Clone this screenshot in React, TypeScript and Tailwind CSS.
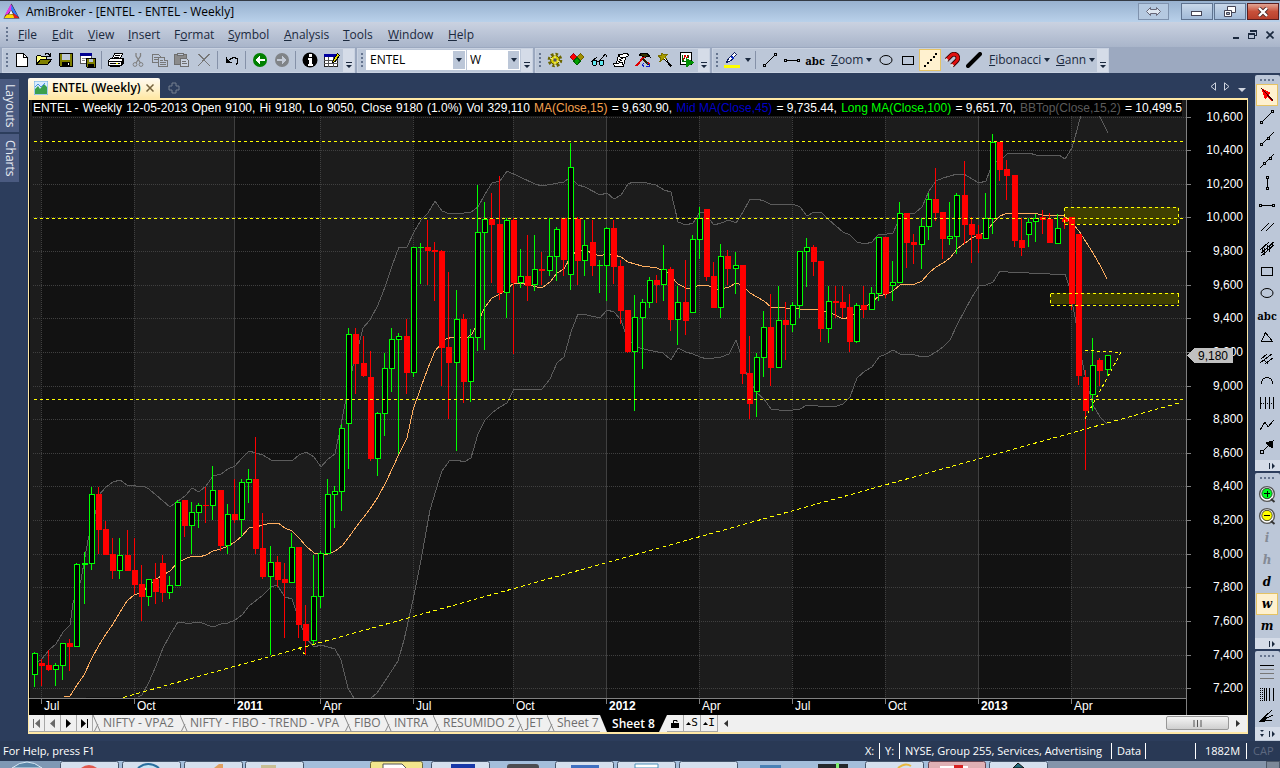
import React from "react";

type Candle = [up: 0 | 1, high: number, top: number, bottom: number, low: number];

const candles: Candle[] = [
  [1, 652, 653, 675, 687], [0, 659, 663, 666, 686], [0, 650, 665, 670, 671], [1, 663, 665, 670, 686],
  [1, 643, 643, 666, 680], [0, 639, 643, 647, 671], [1, 563, 564, 647, 647], [1, 552, 563, 565, 604],
  [1, 487, 494, 564, 570], [0, 487, 494, 530, 554], [0, 521, 529, 555, 555], [0, 538, 554, 571, 579],
  [1, 538, 555, 571, 579], [0, 530, 555, 571, 571], [0, 538, 570, 585, 594], [0, 565, 584, 597, 621],
  [1, 579, 579, 597, 606], [0, 563, 579, 592, 604], [0, 555, 563, 593, 602], [1, 576, 585, 593, 599],
  [1, 500, 502, 586, 586], [0, 500, 500, 526, 537], [1, 502, 512, 526, 554], [1, 503, 505, 513, 528],
  [0, 487, 505, 506, 523], [1, 466, 490, 506, 520], [0, 490, 490, 546, 551], [1, 504, 514, 546, 554],
  [0, 479, 514, 520, 523], [1, 479, 482, 520, 537], [1, 469, 479, 483, 503], [0, 437, 479, 549, 554],
  [0, 513, 548, 577, 579], [1, 546, 562, 577, 655], [0, 556, 562, 580, 587], [0, 563, 579, 583, 638],
  [1, 533, 547, 583, 583], [0, 547, 547, 625, 638], [0, 605, 624, 641, 655], [1, 555, 596, 641, 645],
  [1, 551, 553, 597, 608], [1, 479, 494, 554, 554], [1, 486, 491, 495, 528], [1, 424, 428, 492, 511],
  [1, 328, 334, 424, 469], [0, 328, 334, 364, 394], [0, 336, 363, 376, 377], [0, 351, 377, 459, 461],
  [1, 412, 413, 459, 476], [1, 353, 368, 414, 436], [1, 328, 339, 369, 392], [1, 333, 336, 340, 454],
  [0, 319, 336, 373, 394], [1, 247, 247, 373, 377], [1, 243, 247, 248, 284], [0, 220, 247, 251, 285],
  [0, 242, 250, 252, 301], [0, 250, 251, 348, 386], [0, 272, 347, 363, 419], [1, 290, 319, 363, 451],
  [0, 314, 319, 382, 403], [1, 329, 337, 382, 402], [1, 185, 232, 338, 351], [1, 202, 219, 233, 350],
  [0, 193, 219, 225, 283], [0, 176, 224, 293, 300], [1, 218, 220, 293, 318], [0, 218, 220, 283, 354],
  [1, 249, 276, 283, 288], [0, 235, 276, 286, 301], [1, 235, 269, 285, 291], [0, 252, 269, 271, 285],
  [1, 218, 256, 271, 276], [1, 227, 229, 257, 281], [0, 218, 218, 260, 276], [1, 143, 167, 275, 290],
  [0, 217, 219, 261, 285], [1, 220, 245, 261, 276], [0, 220, 242, 266, 276], [1, 260, 265, 266, 293],
  [1, 227, 228, 266, 301], [0, 220, 228, 267, 284], [0, 260, 266, 311, 324], [0, 310, 310, 352, 353],
  [1, 295, 317, 352, 411], [1, 299, 302, 318, 369], [1, 277, 280, 303, 308], [0, 275, 280, 285, 303],
  [1, 245, 269, 285, 301], [0, 267, 269, 320, 331], [1, 286, 302, 320, 345], [0, 260, 302, 321, 335],
  [1, 235, 239, 313, 313], [1, 207, 218, 240, 259], [0, 209, 209, 277, 281], [0, 262, 276, 308, 308],
  [1, 244, 256, 308, 318], [0, 250, 256, 269, 285], [1, 252, 265, 269, 294], [0, 265, 265, 374, 384],
  [0, 336, 373, 404, 419], [1, 353, 357, 392, 417], [1, 311, 327, 358, 377], [0, 294, 327, 368, 386],
  [1, 286, 320, 368, 368], [0, 302, 320, 325, 360], [1, 302, 305, 325, 332], [1, 251, 251, 306, 318],
  [1, 238, 247, 252, 287], [0, 245, 247, 262, 276], [0, 261, 261, 329, 342], [1, 286, 301, 329, 343],
  [0, 286, 301, 303, 318], [0, 286, 302, 308, 318], [0, 294, 307, 342, 352], [1, 303, 305, 342, 343],
  [0, 286, 305, 310, 318], [1, 287, 293, 310, 310], [1, 237, 237, 294, 301], [0, 237, 237, 294, 298],
  [1, 261, 282, 286, 301], [1, 202, 213, 283, 283], [0, 213, 213, 243, 268], [0, 234, 242, 245, 264],
  [1, 218, 226, 245, 269], [1, 193, 199, 227, 240], [0, 168, 199, 213, 221], [0, 212, 212, 239, 259],
  [1, 202, 236, 239, 245], [1, 193, 195, 237, 254], [0, 161, 195, 225, 244], [0, 217, 224, 235, 263],
  [0, 225, 234, 239, 253], [1, 193, 218, 239, 239], [1, 134, 142, 219, 234], [0, 142, 142, 170, 181],
  [0, 160, 169, 176, 200], [0, 175, 175, 241, 247], [0, 218, 240, 248, 256], [1, 218, 222, 235, 247],
  [1, 214, 218, 222, 242], [0, 210, 217, 220, 234], [0, 213, 219, 243, 243], [1, 214, 228, 244, 244],
  [0, 214, 218, 222, 229], [0, 217, 217, 304, 310], [0, 234, 234, 376, 385], [0, 370, 377, 411, 470],
  [1, 338, 365, 395, 411], [0, 358, 360, 371, 386], [1, 355, 355, 370, 376],
];

const average =
  "64,697 70,696 77,685 84,675 92,658 99,645 106,634 113,624 120,612 127,601 134,595 142,592 149,586 156,579 163,575 170,571 178,562 185,559 192,556 199,557 206,555 213,551 221,549 228,546 235,542 242,536 249,528 256,527 263,525 271,523 278,523 285,528 292,531 299,538 306,546 314,553 321,554 328,554 335,551 342,546 349,537 356,527 363,518 370,509 378,497 387,480 399,454 407,438 413,410 421,387 428,368 435,351 440,345 446,339 453,337 468,337 472,334 478,322 485,307 492,298 500,294 507,289 514,283 521,283 528,285 542,288 550,282 557,273 564,269 571,256 578,250 587,251 599,256 607,254 614,255 621,257 628,262 642,266 657,268 668,273 678,284 688,289 700,285 707,285 717,290 729,287 736,283 742,285 750,293 757,297 764,301 771,307 786,308 800,309 807,310 818,309 833,314 843,319 850,317 857,312 865,307 872,302 879,296 887,294 893,291 900,285 915,284 922,281 929,273 936,267 943,263 950,258 958,248 965,243 972,238 979,235 986,232 993,223 1000,216 1005,214 1015,213 1033,213 1043,215 1055,216 1063,215 1072,223 1079,231 1086,242 1093,253 1101,267 1107,279";

const upperBand =
  "34,664 41,660 49,650 56,644 63,632 70,625 73,603 81,580 88,540 96,510 99,495 106,487 113,482 120,480 127,485 145,487 149,489 156,495 170,507 178,501 185,496 192,488 199,492 206,486 213,476 221,474 228,469 235,466 242,458 249,451 263,455 271,460 292,461 299,455 306,452 314,457 321,467 328,459 335,454 340,430 349,383 355,358 360,340 363,328 370,320 378,305 385,287 392,266 399,247 407,247 414,232 421,220 428,213 435,201 442,211 450,214 457,213 464,213 471,212 478,207 485,194 492,183 500,181 507,171 535,184 542,186 553,184 564,182 568,179 573,180 578,185 585,187 600,195 607,193 614,199 621,195 628,184 633,182 642,182 656,185 664,190 671,192 678,222 686,225 693,223 700,212 705,213 714,225 721,223 729,220 736,223 743,212 750,199 757,199 764,201 770,204 786,205 793,204 800,207 807,216 814,212 822,213 829,220 843,232 850,235 857,242 865,244 872,242 879,234 887,234 893,233 900,217 905,213 915,213 922,207 929,191 936,181 943,178 957,174 964,174 972,179 979,183 986,181 990,170 995,162 1001,160 1008,153 1029,153 1036,155 1059,155 1065,159 1072,148 1077,130 1081,115 1087,100 1093,100 1099,115 1108,133";

const lowerBand =
  "138,697 142,695 149,682 156,666 163,648 170,635 178,622 185,623 192,623 199,622 213,627 221,624 228,623 235,620 242,615 249,606 263,595 271,587 277,585 285,597 292,599 299,620 306,638 314,647 321,645 335,649 341,660 348,688 354,698 371,698 377,693 387,678 398,661 404,640 413,600 421,560 430,510 439,480 442,471 450,460 457,460 464,462 471,458 478,434 485,420 492,413 500,407 507,403 514,389 542,389 550,379 557,363 564,357 571,332 578,314 587,315 600,318 607,310 614,312 621,320 625,332 630,342 640,348 648,350 663,353 671,360 678,348 686,352 693,354 700,357 707,359 721,357 729,354 736,340 740,352 747,375 757,393 764,399 771,409 786,411 800,409 807,405 814,405 822,407 837,406 843,404 850,397 857,378 865,371 872,367 879,357 886,354 893,350 900,354 915,355 922,357 929,356 936,352 943,347 950,340 958,323 965,310 972,297 979,286 986,285 993,282 1000,271 1008,272 1029,273 1050,274 1065,274 1069,286 1075,317 1082,360 1086,380 1093,405 1100,417 1107,424";

const bandArea = upperBand + " " + lowerBand.split(" ").reverse().join(" ") + " 34,698";

const priceLevels: [string, number][] = [
  ["10,600", 117], ["10,400", 150], ["10,200", 184], ["10,000", 217], ["9,800", 251], ["9,600", 285],
  ["9,400", 318], ["9,200", 352], ["9,000", 386], ["8,800", 419], ["8,600", 453], ["8,400", 486],
  ["8,200", 520], ["8,000", 554], ["7,800", 587], ["7,600", 621], ["7,400", 655], ["7,200", 688],
];

const quarters: [string, number][] = [
  ["Jul", 41], ["Oct", 134], ["2011", 234], ["Apr", 320], ["Jul", 413], ["Oct", 513],
  ["2012", 606], ["Apr", 699], ["Jul", 792], ["Oct", 885], ["2013", 978], ["Apr", 1071],
];

const darkSpans: [number, number][] = [[41, 134], [234, 320], [413, 513], [606, 699], [792, 885], [978, 1071]];

const legend: [string, string][] = [
  ...["ENTEL -", "Weekly", "12-05-2013", "Open", "9100,", "Hi", "9180,", "Lo", "9050,", "Close", "9180", "(1.0%)", "Vol", "329,110"].map(
    (t): [string, string] => [t, "text-white"],
  ),
  ["MA(Close,15)", "text-[#f4a050]"], ["= 9,630.90,", "text-white"],
  ["Mid MA(Close,45)", "text-[#0000c8]"], ["= 9,735.44,", "text-white"],
  ["Long MA(Close,100)", "text-[#00ff00]"], ["= 9,651.70,", "text-white"],
  ["BBTop(Close,15,2)", "text-[#5c5c5c]"], ["= 10,499.5", "text-white"],
];

function CandleMark({ index, candle }: { index: number; candle: Candle }) {
  const [up, high, top, bottom, low] = candle;
  const x = Math.floor(34 + (index * 93) / 13);
  if (!up) {
    return (
      <g fill="#ff0000">
        <rect x={x} y={high} width="1" height={low - high} />
        <rect x={x - 2} y={top} width="6" height={bottom - top} />
      </g>
    );
  }
  return (
    <g fill="#00ff00">
      <rect x={x} y={high} width="1" height={low - high} />
      <rect x={x - 2} y={top} width="6" height={bottom - top} />
      {bottom - top > 2 && <rect x={x - 1} y={top + 1} width="4" height={bottom - top - 2} fill="#000" />}
    </g>
  );
}

function PriceChart() {
  return (
    <svg viewBox="29 100 1218 615" className="block h-full w-full bg-black" preserveAspectRatio="xMinYMin meet" shapeRendering="crispEdges" role="img" aria-label="ENTEL weekly candles">
      <defs>
        <clipPath id="plot"><rect x="30" y="100" width="1156" height="598" /></clipPath>
      </defs>
      <rect x="30" y="100" width="1156" height="598" fill="#1c1c1c" />
      {darkSpans.map(([a, b]) => <rect key={a} x={a} y="100" width={b - a} height="598" fill="#121212" />)}
      <g clipPath="url(#plot)"><polygon points={bandArea} fill="#1c1c1c" /></g>
      <g stroke="#404040" strokeDasharray="1 1">
        {priceLevels.map(([l, y]) => <line key={l} x1="33" x2="1186" y1={y + 0.5} y2={y + 0.5} />)}
      </g>
      {quarters.map(([l, x]) => (
        <line key={x} x1={x + 0.5} x2={x + 0.5} y1="116" y2="698" stroke="#404040" strokeDasharray={l.startsWith("20") ? undefined : "1 1"} />
      ))}
      <g fill="#3f3f00">
        <rect x="1064" y="207" width="115" height="17" />
        <rect x="1050" y="293" width="129" height="11" />
      </g>
      <g fill="none" clipPath="url(#plot)">
        <polyline points={upperBand} stroke="#5c5c5c" />
        <polyline points={lowerBand} stroke="#5c5c5c" />
        <polyline points={average} stroke="#ffae60" />
      </g>
      {candles.map((c, i) => <CandleMark key={i} index={i} candle={c} />)}
      <g fill="none" stroke="#ffff00" strokeDasharray="3 3">
        <path d="M34 141.5H1183M34 218.5H1183M34 399.5H1183" />
        <path d="M1064.5 207.5H1179M1064.5 224.5H1179M1050.5 293.5H1179M1050.5 305.5H1179" />
        <path d="M1064.5 208V225M1178.5 208V225M1050.5 294V306M1178.5 294V306" />
        <path d="M1085 350.5L1121 352.5" />
        <path d="M1085 418.5L1121 352.5M299 647L306 656" />
        <path d="M123 697.5L1179 403" strokeDasharray="4 3" />
      </g>
      <g stroke="#808080">
        <path d="M29 698.5H1186M1186.5 100V715" />
        {priceLevels.map(([l, y]) => <line key={l} x1="1187" x2="1191" y1={y + 0.5} y2={y + 0.5} />)}
        {quarters.map(([, x]) => <line key={x} x1={x + 0.5} x2={x + 0.5} y1="699" y2="704" />)}
      </g>
      <g fill="#fff" fontFamily="'Liberation Sans', Arial, sans-serif" fontSize="12">
        {priceLevels.map(([l, y]) => <text key={l} x="1243" y={y + 4} textAnchor="end">{l}</text>)}
        {quarters.map(([l, x]) => <text key={x} x={x + 3} y="710" fontWeight={l.startsWith("20") ? 700 : 400}>{l}</text>)}
        <path d="M1187 355.5L1194 348H1233V363H1194Z" fill="#c0c0c0" />
        <text x="1198" y="360" fill="#000">9,180</text>
      </g>
    </svg>
  );
}

/* ---------- icons ---------- */

function Ico({ children, size = 16 }: { children: React.ReactNode; size?: number }) {
  return (
    <svg width={size} height={size} viewBox={`0 0 ${size} ${size}`} fill="none" stroke="#000" shapeRendering="crispEdges" aria-hidden="true">
      {children}
    </svg>
  );
}

const floppy = (
  <>
    <path d="M1.5 1.5H14.5V14.5H2.5L1.5 13.5Z" fill="#808000" />
    <path d="M4 2H12V8H4Z" fill="#bcc7d8" stroke="none" />
    <path d="M4 10H12V14H4Z" fill="#000" stroke="none" />
    <path d="M10 11H11V13H10Z" fill="#fff" stroke="none" />
  </>
);

const topIcons: Record<string, React.ReactNode> = {
  New: <Ico><path d="M2.5 1.5H9.5L13.5 5.5V14.5H2.5Z" fill="#fff" /><path d="M9.5 1.5V5.5H13.5" /></Ico>,
  Open: <Ico><path d="M0.5 12.5V4.5L1.5 3.5H4.5L5.5 4.5H10.5V7.5" fill="#ffff80" /><path d="M0.5 12.5L4.5 7.5H15.5L11.5 12.5Z" fill="#808000" /><path d="M9 2.5L10 1.5H12L14.5 4M14.5 1V4.5H11" /></Ico>,
  Save: <Ico>{floppy}</Ico>,
  "Save all": <Ico><path d="M0.5 1.5H11.5V11.5H0.5Z" fill="#fff" stroke="#555" /><path d="M0 1H12V4H0Z" fill="#000090" stroke="none" /><path d="M2 6.5H6M2 8.5H5" stroke="#888" /><path d="M6.5 6.5H15.5V15.5H7.5L6.5 14.5Z" fill="#808000" /><path d="M9 7H13V10H9Z" fill="#bcc7d8" stroke="none" /><path d="M8 12H14V15H8Z" fill="#000" stroke="none" /></Ico>,
  Print: <Ico><path d="M4.5 6.5L6.5 1.5H14.5L12.5 6.5Z" fill="#fff" /><path d="M7 3.5H12M6 5.5H11" /><path d="M0.5 8.5L2.5 6.5H15.5V11.5L13.5 13.5H0.5Z" fill="#fff" /><path d="M0 9.5H13M13.5 9V13M2 11.5H12M2.5 13V14.5H11.5V13M14.5 7V12" /><path d="M8 11H10V12H8Z" fill="#ff0" stroke="none" /></Ico>,
  Cut: <Ico><g stroke="#808080" shapeRendering="auto"><path d="M6 1V4L10.5 11M10.5 1V4L6 11" strokeWidth="1.3" /><circle cx="5" cy="12.5" r="1.9" /><circle cx="11" cy="12.5" r="1.9" /></g></Ico>,
  Copy: <Ico><g stroke="#777" fill="#bcc7d8"><path d="M0.5 2.5H6.5L8.5 4.5V10.5H0.5Z" /><path d="M2 5.5H7M2 7.5H7" /><path d="M6.5 5.5H12.5L15.5 8.5V14.5H6.5Z" /><path d="M12.5 5.5V8.5H15.5M8 8.5H11M8 10.5H14M8 12.5H14" /></g></Ico>,
  Paste: <Ico><g stroke="#6f6f6f"><path d="M0.5 2.5H12.5V12.5H0.5Z" fill="#8b8b8b" /><path d="M3.5 3.5V1.5H9.5V3.5Z" fill="#bcc7d8" /><path d="M6.5 6.5H12.5L14.5 8.5V14.5H6.5Z" fill="#c8d0dd" /><path d="M8 9.5H12M8 11.5H13" /></g></Ico>,
  Delete: <Ico><path d="M2 2L14 14M14 2L2 14M3 2L9 8M13 2L4 12" stroke="#777" /></Ico>,
  Undo: <Ico><path d="M2.5 5V10.5H8M3 10L7 6.5L10 5.5L13 6.5L14 9L13 11.5L12 12.5" /><path d="M2 6V11H7Z" fill="#000" stroke="none" /></Ico>,
  Back: <Ico><circle cx="8" cy="8" r="7" fill="#008000" stroke="none" shapeRendering="auto" /><path d="M3 8L8 3.5V7H13V9H8V12.5Z" fill="#fff" stroke="none" /></Ico>,
  Forward: <Ico><circle cx="8" cy="8" r="7" fill="#808488" stroke="none" shapeRendering="auto" /><path d="M13 8L8 3.5V7H3V9H8V12.5Z" fill="#c3cad6" stroke="none" /></Ico>,
  Information: <Ico><circle cx="8" cy="8" r="7.5" fill="#000" stroke="none" shapeRendering="auto" /><path d="M7 2H9.5V4.5H7ZM5.500 6H9.5V12H11V13.5H5.5V12H7V7.5H5.5Z" fill="#fff" stroke="none" /></Ico>,
  "Edit quotes": <Ico><path d="M0.5 2.5H13.5V14.5H0.5Z" fill="#fff" stroke="#222" /><path d="M0 2H14V5H0Z" fill="#0000a0" stroke="none" /><path d="M0 8.5H14M0 11.5H14M4.5 5V15M9.5 5V15" stroke="#555" /><path d="M8.5 10.5L9.5 7.5L13.5 1.5L15.5 3.5L11 9.5Z" fill="#e8e000" /></Ico>,
  Settings: <Ico><g shapeRendering="auto"><circle cx="8" cy="8" r="5.8" stroke="#6b6500" strokeWidth="3" strokeDasharray="2.6 1.9" /><circle cx="8" cy="8" r="4.4" fill="#d8d000" stroke="#5e5a00" /><path d="M8 2V14M3 6L13 10" stroke="#fff8a0" /><circle cx="8" cy="8" r="1.8" fill="#555" stroke="none" /></g></Ico>,
  Categories: <Ico><path d="M1 5L4.5 1.5L8 5L4.5 8.5Z" fill="#ff0000" stroke="#a00020" /><path d="M8 5L11.5 1.5L15 5L11.5 8.5Z" fill="#a09000" stroke="#706000" /><path d="M4.5 9L8 5.5L11.5 9L8 13Z" fill="#00a000" stroke="#006000" /></Ico>,
  Explore: <Ico><path d="M0.5 9.5L6 5M8 9.5L14 2.5L15.5 3.5V5" /><path d="M1.5 8.5H5.5V12.5L4.5 13.5H2.5L1.5 12.5ZM8.5 8.5H12.5V12.5L11.5 13.5H9.5L8.5 12.5Z" fill="#60e8f0" /><path d="M6 9.5H8" /></Ico>,
  Script: <Ico><path d="M5.5 2.5L14.5 1.5L15.5 3.5L12.5 5.5L10.5 14.5L1.5 14.5L0.5 11.5L3.5 11.5Z" fill="#fff" /><path d="M5.5 2.5L7.5 5.5L12 5M3.5 11.5L9 10.5L10.5 14.5M6 7.5L10 6.5M5 9.5L9 8.5" /></Ico>,
  Tools: <Ico><path d="M4 3L7 1H12L15 5L12 4L10 6L7 4Z" fill="#333300" /><path d="M9 5L1 14" stroke="#e00000" strokeWidth="2" /><path d="M8 7L14 13" stroke="#2b2000" strokeWidth="2" /><path d="M9 11L7.5 13L9 15M12 11L15 12L14 15L11 14" stroke="#1020d0" /><path d="M13 10.5L15.5 12.5" stroke="#e00000" /></Ico>,
  Wizard: <Ico><path d="M5 1L7 3L10 2.500L8.500 5L10 8L6.500 7L3 9.500L4 6L1 4L4.500 3.500Z" fill="#a89c00" stroke="#7a7000" /><path d="M8 7L14.5 14.5" strokeWidth="2" /><path d="M7.500 6.5L10 9" stroke="#fff" /></Ico>,
  Report: <Ico><path d="M1.5 0.5H12.5V12.5H1.5Z" fill="#fff" /><path d="M3.5 3V9.5H11M4 9L6 4L8 6L9 3L10 6" stroke="#006000" /><path d="M4 8L6 3.5L8 6L9.5 3" stroke="#e00000" /><path d="M7 6L15.5 10.5L7 15.5Z" fill="#009000" stroke="none" /></Ico>,
  Pen: <Ico size={18}><path d="M3.5 11.5L5.5 7.5L11.5 1.5L13.5 3.5L8 9.5Z" fill="#fff" stroke="#102060" /><path d="M8.5 5.5L11 8" stroke="#1030c0" strokeWidth="2" /><path d="M1 14H17V17H1Z" fill="#ffff00" stroke="none" /></Ico>,
};

const trendLine = <Ico><path d="M3 13L13 3" /><path d="M1.5 12.5H3.5V14.5H1.5ZM12.5 1.5H14.5V3.5H12.5Z" fill="#bcc7d8" /></Ico>;
const horizontal = <Ico><path d="M2 8.5H14" /><path d="M0.5 7.5H2.5V9.5H0.5ZM13.5 7.5H15.5V9.5H13.5Z" fill="#bcc7d8" /></Ico>;
const ellipse = <Ico><ellipse cx="8" cy="8" rx="6" ry="4.5" shapeRendering="auto" /></Ico>;
const rectangle = <Ico><path d="M2.5 4.5H13.5V12.5H2.5Z" /></Ico>;
const abc = <span className="font-['Noto_Serif','DejaVu_Serif',serif] text-[11px] leading-none font-bold text-black">abc</span>;

const sideTools: [string, React.ReactNode][] = [
  ["Select", <Ico><path d="M2 1L12 6L9.5 8L14.5 13L13 14.5L8 10L6 12Z" fill="#ff0000" stroke="none" /><path d="M2 1L14 13.5" stroke="#400" /></Ico>],
  ["Trend line", trendLine],
  ["Ray", <Ico><path d="M3 13L15 1" /><path d="M1.5 12.5H3.5V14.5H1.5ZM8.5 6.5H10.5V8.5H8.5Z" fill="#bcc7d8" /></Ico>],
  ["Extended line", <Ico><path d="M1 15L15 1" /><path d="M4.5 9.5H6.5V11.5H4.5ZM10.5 4.5H12.5V6.5H10.5Z" fill="#bcc7d8" /></Ico>],
  ["Vertical line", <Ico><path d="M8.5 3V13" /><path d="M7.5 1.5H9.5V3.5H7.5ZM7.5 12.5H9.5V14.5H7.5Z" fill="#bcc7d8" /></Ico>],
  ["Horizontal line", horizontal],
  ["Parallel lines", <Ico><path d="M2 12L10 4M7 12L15 4" /></Ico>],
  ["Regression channel", <Ico><path d="M1 9L10 1M2 15L15 4M2 12L15 1M3.5 6V12M5.5 7V14M8.5 4V9M10.5 5V11M13.5 1V6" /></Ico>],
  ["Rectangle", rectangle],
  ["Ellipse", ellipse],
  ["Text", abc],
  ["Triangle", <Ico><path d="M2.5 12.5L6.5 3.5L13.5 12.5Z" /></Ico>],
  ["Pitchfork", <Ico><path d="M2 8L8 3M1 12L5 9L13 3M6 13L14 7M5 9L9 13" /></Ico>],
  ["Arc", <Ico><path d="M2.5 11V8.5L4.5 5.5L7 4.5H9L11.5 5.5L13.5 8.5V11" /></Ico>],
  ["Cycle", <Ico><path d="M1.5 2V14M6.5 2V14M10.5 2V14M14.5 2V14" /><path d="M2 8.5H14" strokeDasharray="1 1" /></Ico>],
  ["Zig zag", <Ico><path d="M1 13L6 5L9 10L15 3" /></Ico>],
  ["Arrow", <Ico><path d="M3 13L12 4" /><path d="M14 2L13 9L7 4Z" fill="#000" /><path d="M1.5 11.5H4.5V14.5H1.5Z" fill="#bcc7d8" /></Ico>],
];

const zoomGlyph = (plus: boolean) => (
  <Ico size={18}>
    <g shapeRendering="auto">
      <circle cx="9" cy="9" r="7.4" fill="#fff" stroke="#555" strokeWidth="1.4" />
      <path d="M13 14L16.5 17" stroke="#333" strokeWidth="2" />
      <circle cx="9" cy="8.5" r="5.2" fill={plus ? "#00ff20" : "#ffff00"} stroke="#222" strokeWidth="0.8" />
    </g>
    <path d={plus ? "M6 8.5H12M9.5 6V12" : "M6 8.5H12"} strokeWidth="1" />
  </Ico>
);

const letter = (s: string, dim?: boolean) => (
  <span className={"font-['DejaVu_Serif','Liberation_Serif',serif] text-[12px] leading-none font-bold italic " + (dim ? "text-[#848a96]" : "text-black")}>{s}</span>
);

const periodTools: [string, React.ReactNode][] = [
  ["Zoom in", zoomGlyph(true)], ["Zoom out", zoomGlyph(false)], ["Intraday", letter("i", true)],
  ["Hourly", letter("h", true)], ["Daily", letter("d")], ["Weekly", letter("w")], ["Monthly", letter("m")],
];

const fanTools: [string, React.ReactNode][] = [
  ["Retracement", <Ico><path d="M1 1.5H15" /><path d="M1 5.5H15M1 9.5H15M1 14.5H15" stroke="#777" /></Ico>],
  ["Time zones", <Ico><path d="M1.5 2V15M3.5 2V15" strokeDasharray="1 1" /><path d="M5.5 2V15M7.5 2V15M10.5 2V15M14.5 2V15" /></Ico>],
  ["Fan", <Ico><path d="M1 13L13 2M1 13L14 7M1 13L13 12" /><path d="M1 13.500L6 9.500V13Z" fill="#000" /></Ico>],
];

/* ---------- small parts ---------- */

const ToolButton = ({ label, active, children }: { label: string; active?: boolean; children: React.ReactNode }) => (
  <button aria-label={label} className={"flex h-[22px] w-[22px] shrink-0 items-center justify-center " + (active ? "border border-[#e5c365] bg-[#fff1cf]" : "")}>
    {children}
  </button>
);

const Grip = () => (
  <span className="flex w-2 shrink-0 items-center justify-center">
    <svg width="2" height="15" aria-hidden="true"><path d="M1 0V15" stroke="#66758f" strokeWidth="2" strokeDasharray="2 2" /></svg>
  </span>
);

const SideGrip = ({ tall }: { tall?: boolean }) => (
  <span className={"flex items-center justify-center " + (tall ? "h-[10px]" : "h-[9px]")}>
    <svg width="15" height="2" aria-hidden="true"><path d="M0 1H15" stroke="#66758f" strokeWidth="2" strokeDasharray="2 2" /></svg>
  </span>
);

const Sep = () => <span className="mx-[2px] h-[18px] w-[2px] shrink-0 border-l border-[#8591a8]" />;

const Caret = () => <svg width="6" height="4" aria-hidden="true"><path d="M0 0H6L3 4Z" fill="#1b293e" /></svg>;

const Overflow = () => (
  <button aria-label="Toolbar options" className="flex h-full w-[11px] shrink-0 items-end justify-center bg-[#d5dce8] pb-1">
    <svg width="6" height="6" aria-hidden="true"><path d="M0 0H6V1H0ZM0 3H6L3 6Z" fill="#1b293e" /></svg>
  </button>
);

const SideOverflow = ({ last }: { last?: boolean }) => (
  <button aria-label="More tools" className={"flex items-center justify-end gap-1 bg-[#d5dce8] pr-1 " + (last ? "h-[13px]" : "mt-px h-[11px]")}>
    {last && <svg width="5" height="7" aria-hidden="true"><path d="M0 0H4L2 2ZM0 4H4L2 7Z" fill="#1b293e" /></svg>}
    <svg width="7" height="6" aria-hidden="true"><path d="M0 0H1V6H0ZM3 0L6 3L3 6Z" fill="#1b293e" /></svg>
  </button>
);

const Bar = ({ label, children }: { label: string; children: React.ReactNode }) => (
  <div role="toolbar" aria-label={label} className="mr-[2px] flex h-[25px] shrink-0 items-center border border-[#c9d2e1] bg-[#bcc7d8]">
    {children}
  </div>
);

const menus: [string, string, string, string][] = [
  ["", "F", "ile", "w-[34px]"], ["", "E", "dit", "w-[36px]"], ["", "V", "iew", "w-[40px]"], ["", "I", "nsert", "w-[46px]"],
  ["F", "o", "rmat", "w-[54px]"], ["", "S", "ymbol", "w-[56px]"], ["", "A", "nalysis", "w-[59px]"], ["", "T", "ools", "w-[45px]"],
  ["", "W", "indow", "w-[60px]"], ["", "H", "elp", "w-[40px]"],
];

const sheets: [string, string][] = [
  ["NIFTY - VPA2", "w-[87px]"], ["NIFTY - FIBO - TREND - VPA", "w-[164px]"], ["FIBO", "w-[40px]"], ["INTRA", "w-[49px]"],
  ["RESUMIDO 2", "w-[83px]"], ["JET", "w-[31px]"], ["Sheet 7", "w-[53px]"],
];

const windowButton = "flex h-[17px] w-[32px] items-center justify-center border border-[#5f7390] bg-gradient-to-b from-[#c9d8ea] via-[#b4c8e0] to-[#a2bad8]";

export default function App() {
  return (
    <div className="flex h-screen w-full flex-col overflow-hidden bg-[#2c3d5c] font-['Open_Sans','Noto_Sans',sans-serif] text-[12px] leading-4 text-[#1b293e]">
      <header className="flex h-[22px] shrink-0 items-center border-t border-[#333a44] bg-gradient-to-b from-[#98b1cf] to-[#b9d1ea] pr-px pl-[3px]">
        <svg width="17" height="17" viewBox="0 0 17 17" aria-hidden="true">
          <path d="M8.500 0.500L16.500 15.500H0.500Z" fill="#222" />
          <path d="M8 1L4 10L1 14Z" fill="#ff20d0" />
          <path d="M8 1L12 9L8 7L5 11L2 12Z" fill="#e838e8" />
          <path d="M8.500 2L15.500 14L11 11L8 6Z" fill="#3078ff" />
          <path d="M8 7L10 11L6 11.500Z" fill="#f4f4ff" />
          <path d="M1 15L4 11.500H10L12 15Z" fill="#ffd800" />
          <path d="M10 10L13 12L16 15H11Z" fill="#e02020" />
        </svg>
        <h1 className="ml-[6px] flex-1 text-[12px] text-black">AmiBroker - [ENTEL - ENTEL - Weekly]</h1>
        <button aria-label="Switch" className="mr-3 flex h-[17px] w-[31px] items-center justify-center border border-[#7f92ad] bg-[#b5c9e0]">
          <svg width="15" height="9" aria-hidden="true"><path d="M0.5 4.5L4.5 0.5V2.5H10.5V0.5L14.5 4.5L10.5 8.5V6.5H4.5V8.5Z" fill="#dfe7f1" stroke="#667" /></svg>
        </button>
        <div className="flex gap-px">
          <button aria-label="Minimize" className={windowButton}>
            <svg width="12" height="5" className="mt-1" aria-hidden="true"><rect x=".5" y=".5" width="10" height="4" fill="#fff" stroke="#445" /></svg>
          </button>
          <button aria-label="Restore" className={windowButton}>
            <svg width="12" height="11" aria-hidden="true" fill="#fff" stroke="#445"><path d="M3.5 .5H11.5V6.5H3.5Z" /><path d="M.5 4.5H7.5V10.5H.5Z" /><path d="M2.5 6.5H5.5V8.5H2.5Z" fill="#9ab" /></svg>
          </button>
          <button aria-label="Close" className="flex h-[17px] w-[32px] items-center justify-center border border-[#5b1e1e] bg-gradient-to-b from-[#e0a494] via-[#c8503a] to-[#b8402c]">
            <svg width="12" height="10" aria-hidden="true"><path d="M2 1L10 9M10 1L2 9" stroke="#4a2a2a" strokeWidth="4" /><path d="M2 1L10 9M10 1L2 9" stroke="#fff" strokeWidth="2.4" /></svg>
          </button>
        </div>
      </header>

      <nav className="flex h-[25px] shrink-0 items-center bg-gradient-to-b from-[#cad2e1] to-[#a9b5ca] pr-1 pl-[3px]">
        <Grip />
        <ul className="flex flex-1 pl-[7px]">
          {menus.map(([a, u, b, w]) => (
            <li key={u + b} className={w}>
              <button className="whitespace-nowrap">{a}<span className="underline">{u}</span>{b}</button>
            </li>
          ))}
        </ul>
        <div className="flex items-center gap-[9px] pr-[2px]">
          <button aria-label="Minimize document"><svg width="6" height="9" aria-hidden="true"><path d="M0 7H6V9H0Z" fill="#1b293e" /></svg></button>
          <button aria-label="Restore document"><svg width="9" height="9" aria-hidden="true" fill="none" stroke="#1b293e" shapeRendering="crispEdges"><path d="M2.5 2V.5H8.5V5.5H6M2 1.5H8M.5 3.5H6.5V8.5H.5ZM1 4.5H6" /></svg></button>
          <button aria-label="Close document"><svg width="8" height="8" aria-hidden="true"><path d="M.5 .5L7.5 7.5M7.5 .5L.5 7.5" stroke="#1b293e" strokeWidth="1.6" /></svg></button>
        </div>
      </nav>

      <div className="flex h-[26px] shrink-0 items-center bg-[#9ca9c0] pl-[2px]">
        <Bar label="Standard">
          <Grip />
          {["New", "Open", "Save", "Save all"].map((n) => <ToolButton key={n} label={n}>{topIcons[n]}</ToolButton>)}
          <Sep />
          {["Print", "Cut", "Copy", "Paste", "Delete"].map((n) => <ToolButton key={n} label={n}>{topIcons[n]}</ToolButton>)}
          <Sep />
          <ToolButton label="Undo">{topIcons.Undo}</ToolButton>
          <Sep />
          {["Back", "Forward"].map((n) => <ToolButton key={n} label={n}>{topIcons[n]}</ToolButton>)}
          <Sep />
          {["Information", "Edit quotes"].map((n) => <ToolButton key={n} label={n}>{topIcons[n]}</ToolButton>)}
          <Overflow />
        </Bar>
        <Bar label="Ticker">
          <Grip />
          <div className="flex h-5 w-[100px] border border-white bg-white">
            <input aria-label="Symbol" defaultValue="ENTEL" className="w-full min-w-0 pl-[3px] text-black outline-none" />
            <button aria-label="Choose symbol" className="flex w-3 shrink-0 items-center justify-center bg-[#bcc7d8]"><Caret /></button>
          </div>
          <div className="relative mr-px ml-px flex h-5 w-[53px] bg-white">
            <select aria-label="Interval" defaultValue="W" className="w-full appearance-none pl-[3px] text-black outline-none"><option>W</option><option>D</option></select>
            <span className="pointer-events-none absolute inset-y-px right-px flex w-[11px] items-center justify-center bg-[#bcc7d8]"><Caret /></span>
          </div>
          <Overflow />
        </Bar>
        <Bar label="Analysis">
          <Grip />
          {["Settings", "Categories", "Explore", "Script", "Tools", "Wizard", "Report"].map((n) => <ToolButton key={n} label={n}>{topIcons[n]}</ToolButton>)}
          <Overflow />
        </Bar>
        <Bar label="Drawing">
          <Grip />
          <ToolButton label="Pen colour">{topIcons.Pen}</ToolButton>
          <button aria-label="Pen options" className="flex w-[10px] justify-center"><Caret /></button>
          <Sep />
          <ToolButton label="Line">{trendLine}</ToolButton>
          <ToolButton label="Horizontal">{horizontal}</ToolButton>
          <button aria-label="Text" className="flex w-[24px] justify-center">{abc}</button>
          <button className="ml-1 flex w-[44px] items-center gap-[3px]"><span><u>Z</u>oom</span><Caret /></button>
          <ToolButton label="Ellipse">{ellipse}</ToolButton>
          <ToolButton label="Rectangle">{rectangle}</ToolButton>
          <ToolButton label="Dotted" active><Ico><path d="M2 13H4V15H2ZM5 10H7V12H5ZM8 7H10V9H8ZM11 4H13V6H11ZM13 1H15V3H13Z" fill="#000" stroke="none" /></Ico></ToolButton>
          <ToolButton label="Magnet"><Ico><g shapeRendering="auto"><path d="M2.5 8L7.5 3Q10.5 1 13 3.5Q15 6.5 12.5 9L8 13.5" stroke="#300" strokeWidth="4.6" /><path d="M2.5 8L7.5 3Q10.5 1 13 3.5Q15 6.5 12.5 9L8 13.5" stroke="#e01010" strokeWidth="3" /><path d="M1.5 9L3.5 7M7 14.5L9 12.5" stroke="#ddd" strokeWidth="3" /></g></Ico></ToolButton>
          <ToolButton label="Thick"><Ico><path d="M2 14L14 2" strokeWidth="4" strokeLinecap="round" shapeRendering="auto" /></Ico></ToolButton>
          <button className="ml-1 flex w-[63px] items-center gap-[3px]"><span><u>F</u>ibonacci</span><Caret /></button>
          <button className="ml-1 flex w-[41px] items-center gap-[3px]"><span><u>G</u>ann</span><Caret /></button>
          <Overflow />
        </Bar>
      </div>

      <div className="flex min-h-0 flex-1">
        <aside className="flex w-7 shrink-0 flex-col gap-[2px] pt-[6px]">
          {[["Layouts", "h-[53px]"], ["Charts", "h-[48px]"]].map(([t, h]) => (
            <button key={t} className={"flex w-[19px] items-center justify-center bg-[#4a5a80] text-[12px] text-[#e6eaf2] [writing-mode:vertical-rl] " + h}>{t}</button>
          ))}
        </aside>

        <main className="flex min-w-0 flex-1 flex-col">
          <div className="flex h-[25px] shrink-0 items-end">
            <div className="flex h-5 w-[132px] items-center rounded-t-[2px] bg-gradient-to-b from-[#fffaf0] via-[#fff3d0] to-[#ffe8a6] pl-[6px] text-black">
              <svg width="14" height="14" viewBox="0 0 14 14" aria-hidden="true"><rect width="14" height="14" rx="1" fill="#d8ecff" stroke="#6aa8dc" /><path d="M1 8L4 5L6 8L10 3L13 6V13H1Z" fill="#3ba04c" /><path d="M1 6L4 3L7 6L11 2" stroke="#4a90e0" fill="none" /></svg>
              <span className="ml-1 flex-1 font-semibold whitespace-nowrap">ENTEL (Weekly)</span>
              <button aria-label="Close tab" className="mr-[6px]"><svg width="8" height="8" aria-hidden="true"><path d="M.5 .5L7.5 7.5M7.5 .5L.5 7.5" stroke="#75633d" strokeWidth="1.5" /></svg></button>
            </div>
            <button aria-label="New tab" className="mb-1 ml-2"><svg width="12" height="12" aria-hidden="true"><path d="M4 1H8V4H11V8H8V11H4V8H1V4H4Z" fill="none" stroke="#75808f" /></svg></button>
            <div className="mb-[6px] ml-auto flex items-end gap-2 pr-[2px]">
              <button aria-label="Previous tab"><svg width="6" height="10" aria-hidden="true"><path d="M5.5 .8V8.2L1 4.5Z" fill="none" stroke="#ced4df" /></svg></button>
              <button aria-label="Next tab"><svg width="6" height="10" aria-hidden="true"><path d="M.5 .8V8.2L5 4.5Z" fill="none" stroke="#ced4df" /></svg></button>
              <button aria-label="Tab list"><svg width="8" height="4" aria-hidden="true"><path d="M0 0H8L4 4Z" fill="#ced4df" /></svg></button>
            </div>
          </div>

          <section className="flex min-h-0 flex-1 flex-col border-x border-y-2 border-[#ffe8a6]">
            <div className="relative min-h-0 flex-1 bg-black">
              <PriceChart />
              <p className="absolute top-0 right-[65px] left-[3px] flex h-4 justify-between overflow-hidden bg-black pl-px font-['Liberation_Sans',Arial,sans-serif] text-[12px] leading-4 whitespace-pre">
                {legend.map(([t, c], i) => <span key={i} className={c}>{i < legend.length - 1 ? t + " " : t}</span>)}
              </p>
            </div>
            <div className="flex h-[17px] shrink-0 bg-[#f0f0f0] text-[#6d6d6d]">
              {[["First", "M2 1H3V10H2ZM9 1V10L4 5.5Z"], ["Previous", "M8 1V10L3 5.5Z"], ["Next", "M3 1V10L8 5.5Z"], ["Last", "M2 1V10L7 5.5ZM8 1H9V10H8Z"]].map(([l, d], i) => (
                <button key={l} aria-label={l + " sheet"} className="flex w-4 shrink-0 items-center justify-center border-r border-b border-[#a8a8a8]">
                  <svg width="11" height="11" aria-hidden="true"><path d={d} fill={i < 2 ? "#6a6a6a" : "#000"} /></svg>
                </button>
              ))}
              {sheets.map(([t, w]) => (
                <button key={t} className={"flex shrink-0 items-center border-b border-[#9a9a9a] whitespace-nowrap " + w}>
                  <svg width="10" height="16" className="shrink-0" aria-hidden="true"><path d="M0 0L7 16M5 9L1.5 16" fill="none" stroke="#8a8a8a" /></svg>
                  {t}
                </button>
              ))}
              <button className="flex w-[67px] shrink-0 items-center justify-center bg-black font-semibold text-white [clip-path:polygon(0_0,100%_0,59px_100%,7px_100%)]">Sheet 8</button>
              <button aria-label="Lock" className="flex w-[17px] items-center justify-center border-r border-b border-[#a8a8a8]"><svg width="8" height="9" aria-hidden="true"><path d="M0 4H8V9H0Z" fill="#000" /><path d="M2.5 4V1.5H6V3" fill="none" stroke="#000" /></svg></button>
              {["S", "I"].map((t) => (
                <button key={t} aria-label={"Sort " + t} className="flex w-[17px] items-center justify-center border-r border-b border-[#a8a8a8] font-['DejaVu_Sans_Mono',monospace] text-[11px] text-black"><svg width="5" height="4" aria-hidden="true"><path d="M0 4L2.5 1L5 4Z" fill="#000" /></svg>{t}</button>
              ))}
              <button aria-label="Scroll left" className="flex w-4 items-center justify-center"><svg width="4" height="7" aria-hidden="true"><path d="M4 0V7L0 3.5Z" fill="#333" /></svg></button>
              <div className="flex flex-1 justify-end py-px">
                <span className="flex h-[14px] w-[63px] items-center justify-center rounded-[2px] border border-[#979797] bg-gradient-to-b from-[#f4f4f4] to-[#cfcfcf]">
                  <svg width="9" height="7" aria-hidden="true"><path d="M1 0V7M4.5 0V7M8 0V7" stroke="#555" /></svg>
                </span>
              </div>
              <button aria-label="Scroll right" className="flex w-[18px] items-center justify-center"><svg width="4" height="7" aria-hidden="true"><path d="M0 0V7L4 3.5Z" fill="#333" /></svg></button>
            </div>
          </section>
          <div className="h-[7px] shrink-0" />
        </main>

        <aside className="ml-[7px] flex w-[25px] shrink-0 flex-col gap-[2px] pt-[2px]">
          <div role="toolbar" aria-label="Draw" className="flex flex-col rounded-t-[2px] bg-[#bcc7d8]">
            <SideGrip />
            {sideTools.map(([l, icon], i) => <span key={l} className="pl-px"><ToolButton label={l} active={i === 0}>{icon}</ToolButton></span>)}
            <span className="h-px" />
            <SideOverflow />
          </div>
          <div role="toolbar" aria-label="Periodicity" className="flex flex-col rounded-t-[2px] bg-[#bcc7d8]">
            <SideGrip tall />
            {periodTools.map(([l, icon]) => <span key={l} className="pl-px"><ToolButton label={l} active={l === "Weekly"}>{icon}</ToolButton></span>)}
            <SideOverflow />
          </div>
          <div role="toolbar" aria-label="Studies" className="flex flex-1 flex-col rounded-t-[2px] bg-[#bcc7d8]">
            <SideGrip tall />
            {fanTools.map(([l, icon]) => <span key={l} className="pl-px"><ToolButton label={l}>{icon}</ToolButton></span>)}
            <SideOverflow last />
          </div>
        </aside>
      </div>

      <footer className="flex h-5 shrink-0 items-center bg-[#293955] pl-[3px] text-[11px] text-white">
        <span className="flex-1">For Help, press F1</span>
        <span className="w-[14px]">X:</span>
        <span className="w-5 border-l border-white pl-[5px]">Y:</span>
        <span className="w-[212px] border-l border-white pl-[5px] whitespace-nowrap">NYSE, Group 255, Services, Advertising</span>
        <span className="w-[34px] border-l border-white pl-[5px]">Data</span>
        <span className="w-[50px] border-l border-white">&nbsp;</span>
        <span className="w-[51px] border-l border-white pl-[9px]">1882M</span>
        <span className="w-[34px] border-l border-white pl-[6px] text-[#5d6880]">CAP</span>
      </footer>

      <div className="h-[7px] shrink-0 overflow-hidden bg-[#a4bedb]">
        <svg width="100%" height="7" viewBox="0 0 1280 7" preserveAspectRatio="none" aria-hidden="true">
          <rect width="60" height="7" fill="#7f98b4" />
          <rect x="1048" width="232" height="7" fill="#8494aa" />
          <path d="M12 7Q27 -5 42 7Z" fill="#5d87a8" stroke="#d8e8f4" />
          {[60, 122, 184, 245, 431, 555, 617, 679, 865, 989].map((x) => (
            <rect key={x} x={x + 0.5} y="0.5" width="58" height="9" rx="2" fill="#d5e0ee" stroke="#46566c" />
          ))}
          <rect x="370.5" y="0.5" width="52" height="9" rx="2" fill="#f2e68c" stroke="#6d6a40" />
          <rect x="928.5" y="0.5" width="57" height="9" rx="2" fill="#e0b0b4" stroke="#6a4450" />
          <path d="M81 7Q89 1 97 7Z" fill="#e0584c" />
          <path d="M138 7Q148 -1 159 7" fill="#c8e4f4" stroke="#2a6e9e" strokeWidth="2" />
          <path d="M214 7L219 3H223V7Z" fill="#e0a060" />
          <path d="M261 4H276V7H261Z" fill="#c8bf94" />
          <path d="M383 7V3H402L406 7" fill="#fff" stroke="#555" />
          <path d="M451 3H475V7H451Z" fill="#1838a8" />
          <rect x="507" y="3" width="32" height="6" rx="3" fill="#4c4c50" />
          <path d="M571 4H599V7H571Z" fill="#4070c0" />
          <path d="M635 3H658V7H635Z" fill="#fff" stroke="#4a90b8" />
          <path d="M760 4H781V7H760Z" fill="#4a80b4" />
          <path d="M818 3H848V7H818Z" fill="#24282c" />
          <path d="M836 2H839V7H836Z" fill="#80f070" />
          <path d="M898 7Q905 1 911 5" fill="none" stroke="#e8b840" strokeWidth="2" />
          <path d="M940 5H968V7H940Z" fill="#fff" />
          <path d="M954 4H963V7H954Z" fill="#d82020" />
          <path d="M1013 7L1018 2L1024 7Z" fill="#206878" stroke="#111" />
          <rect x="1266.5" y="0.5" width="13" height="9" fill="#7c8898" stroke="#4c5868" />
        </svg>
      </div>
    </div>
  );
}
